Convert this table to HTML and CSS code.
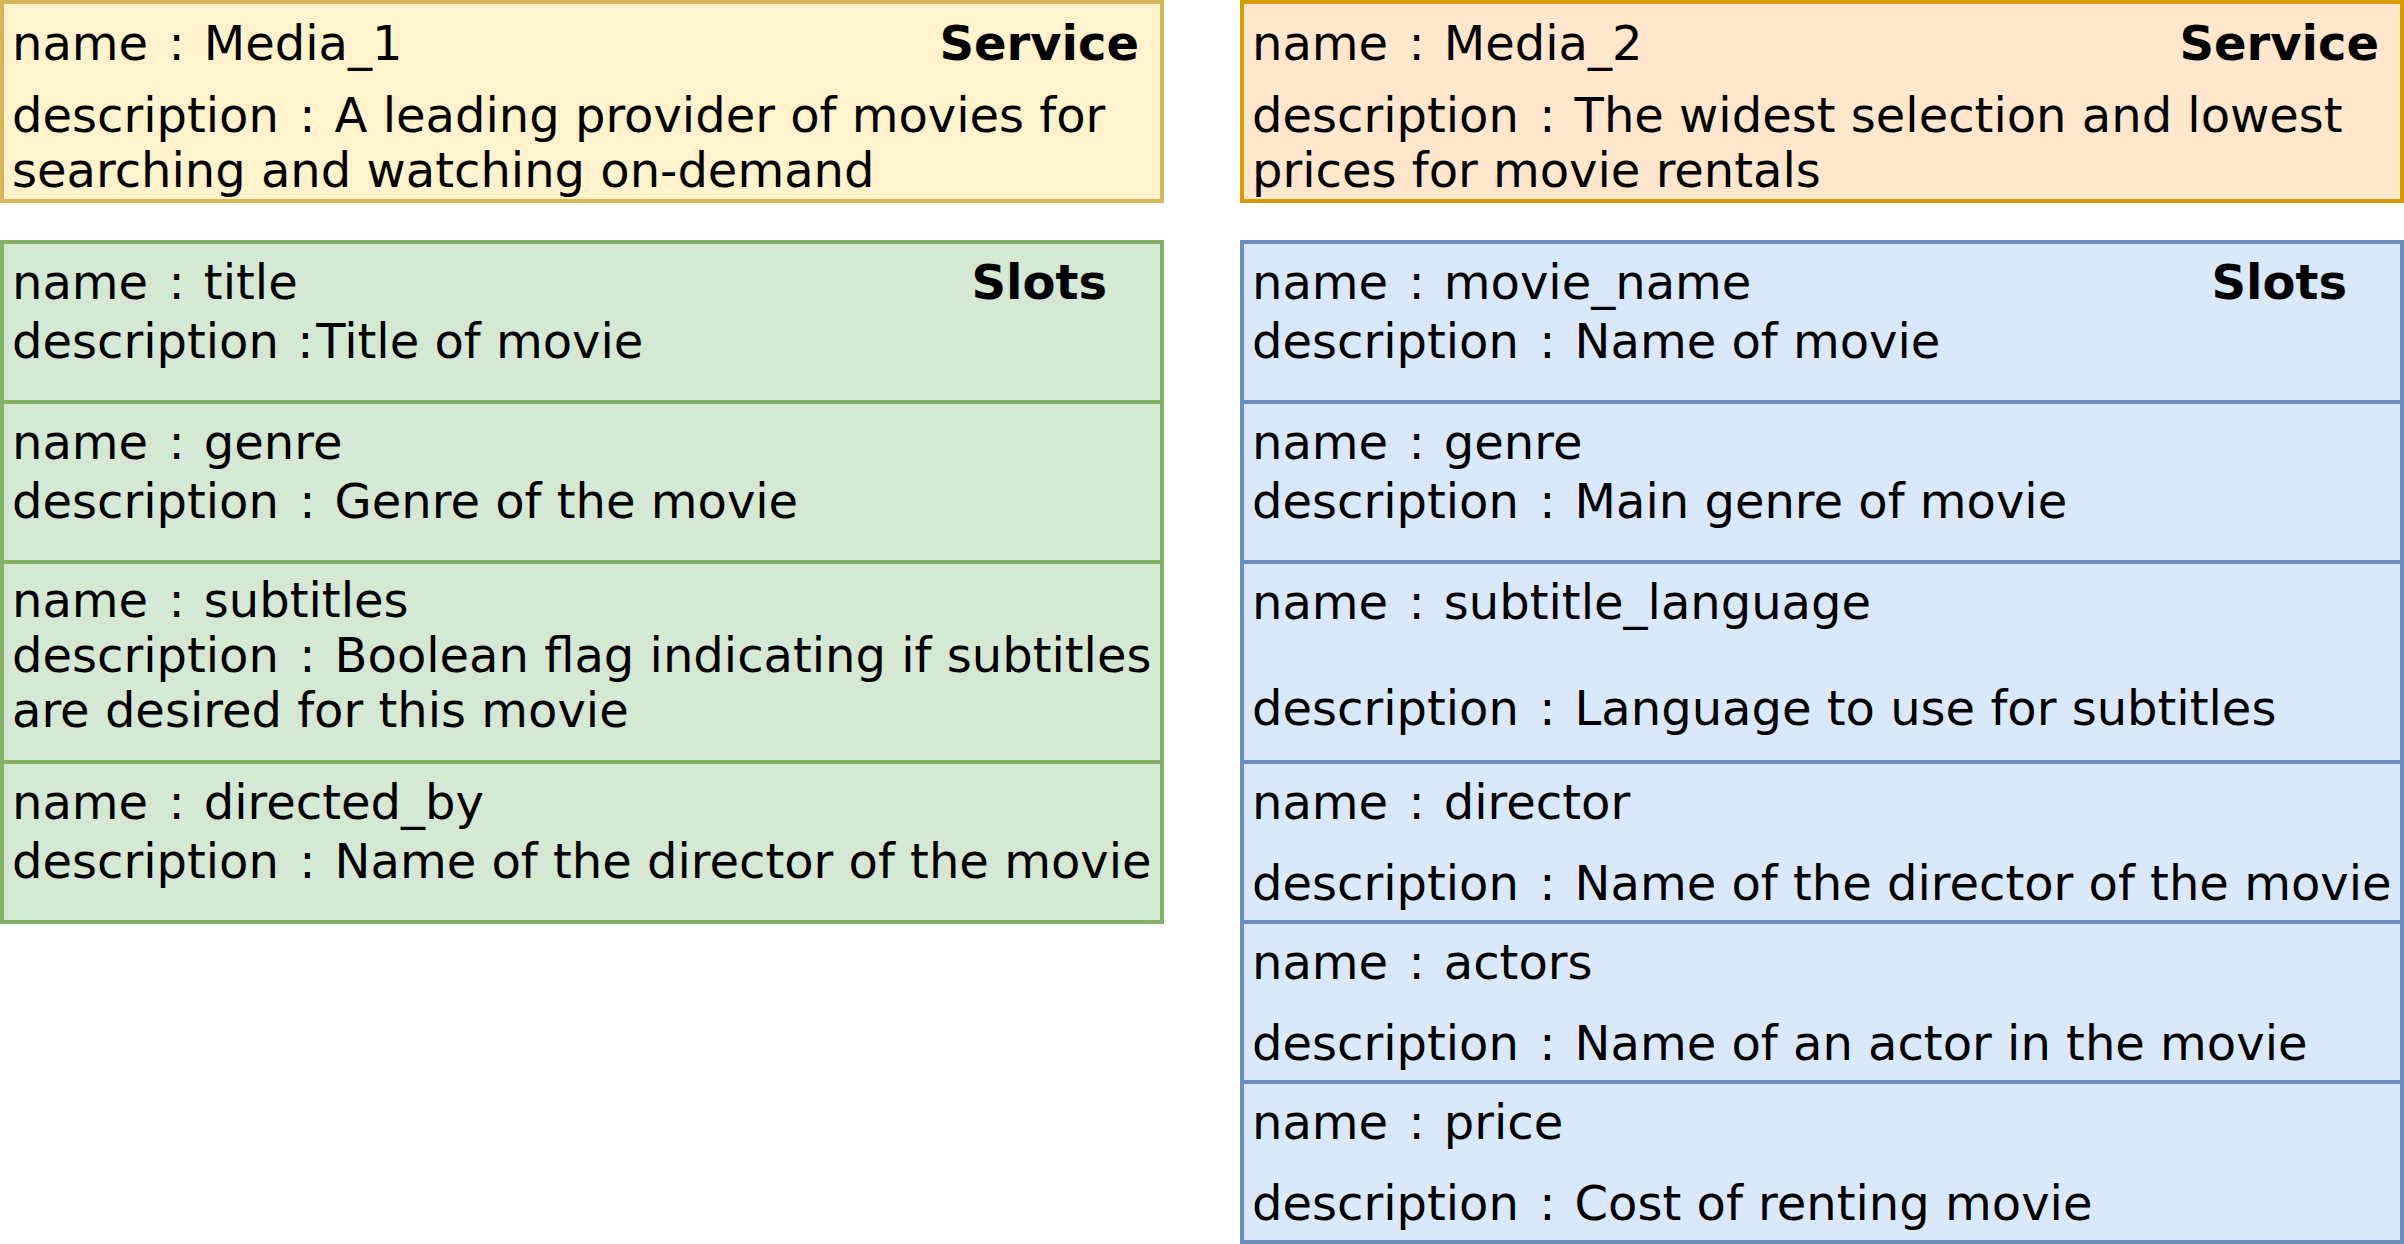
FILE: index.html
```html
<!DOCTYPE html>
<html lang="en">
<head>
<meta charset="utf-8">
<title>Media services</title>
<link rel="stylesheet" href="styles.css">
</head>
<body>
<div class="canvas">
  <div class="col">
    <div class="service service-yellow">
      <div class="head"><span>name<span class="sep"> : </span>Media_1</span><span class="tag tag-service">Service</span></div>
      <div class="desc desc-service">description<span class="sep"> : </span>A leading provider of movies for<br>searching and watching on-demand</div>
    </div>
    <div class="slots slots-green">
      <div class="slot">
        <div class="head"><span>name<span class="sep"> : </span>title</span><span class="tag tag-slots">Slots</span></div>
        <div class="desc gap-s">description <span class="sep-tight">:</span>Title of movie</div>
      </div>
      <div class="slot">
        <div class="head"><span>name<span class="sep"> : </span>genre</span></div>
        <div class="desc gap-s">description<span class="sep"> : </span>Genre of the movie</div>
      </div>
      <div class="slot slot-tall slot-tight">
        <div class="head"><span>name<span class="sep"> : </span>subtitles</span></div>
        <div class="desc gap-0">description<span class="sep"> : </span>Boolean flag indicating if subtitles<br>are desired for this movie</div>
      </div>
      <div class="slot">
        <div class="head"><span>name<span class="sep"> : </span>directed_by</span></div>
        <div class="desc gap-s">description<span class="sep"> : </span>Name of the director of the movie</div>
      </div>
    </div>
  </div>
  <div class="col">
    <div class="service service-orange">
      <div class="head"><span>name<span class="sep"> : </span>Media_2</span><span class="tag tag-service">Service</span></div>
      <div class="desc desc-service">description<span class="sep"> : </span>The widest selection and lowest<br>prices for movie rentals</div>
    </div>
    <div class="slots slots-blue">
      <div class="slot">
        <div class="head"><span>name<span class="sep"> : </span>movie_name</span><span class="tag tag-slots">Slots</span></div>
        <div class="desc gap-s">description<span class="sep"> : </span>Name of movie</div>
      </div>
      <div class="slot">
        <div class="head"><span>name<span class="sep"> : </span>genre</span></div>
        <div class="desc gap-s">description<span class="sep"> : </span>Main genre of movie</div>
      </div>
      <div class="slot slot-tall">
        <div class="head"><span>name<span class="sep"> : </span>subtitle_language</span></div>
        <div class="desc gap-l">description<span class="sep"> : </span>Language to use for subtitles</div>
      </div>
      <div class="slot">
        <div class="head"><span>name<span class="sep"> : </span>director</span></div>
        <div class="desc gap-m">description<span class="sep"> : </span>Name of the director of the movie</div>
      </div>
      <div class="slot">
        <div class="head"><span>name<span class="sep"> : </span>actors</span></div>
        <div class="desc gap-m">description<span class="sep"> : </span>Name of an actor in the movie</div>
      </div>
      <div class="slot">
        <div class="head"><span>name<span class="sep"> : </span>price</span></div>
        <div class="desc gap-m">description<span class="sep"> : </span>Cost of renting movie</div>
      </div>
    </div>
  </div>
</div>
</body>
</html>
```

FILE: styles.css
```css
html, body {
  margin: 0;
  padding: 0;
  background: #ffffff;
}

body {
  font-family: "DejaVu Sans", Verdana, sans-serif;
  font-size: 48px;
  line-height: 55px;
  color: #000000;
}

.canvas {
  display: grid;
  grid-template-columns: 1164px 1164px;
  column-gap: 76px;
  width: 2404px;
}

.col {
  display: flex;
  flex-direction: column;
  gap: 37px;
}

.service {
  box-sizing: border-box;
  height: 203px;
  border: 4px solid;
  padding: 12px 0 0 8px;
  white-space: nowrap;
}

.service-yellow {
  background: #fff2cc;
  border-color: #d6b656;
}

.service-orange {
  background: #ffe6cc;
  border-color: #d79b00;
}

.head {
  display: flex;
  justify-content: space-between;
  align-items: baseline;
}

.sep {
  padding: 0 4px 0 5px;
}

.sep-tight {
  padding: 0 3px 0 3px;
}

.tag {
  font-weight: bold;
}

.tag-service {
  margin-right: 21px;
}

.tag-slots {
  margin-right: 53px;
}

.desc-service {
  margin-top: 17px;
}

.slots {
  border: 4px solid;
  border-top: 0;
  white-space: nowrap;
}

.slots-green {
  background: #d5e8d4;
  border-color: #82b366;
}

.slots-blue {
  background: #dae8fc;
  border-color: #6c8ebf;
}

.slot {
  box-sizing: border-box;
  height: 160px;
  border-top: 4px solid;
  padding: 11px 0 0 8px;
}

.slots-green .slot {
  border-top-color: #82b366;
}

.slots-blue .slot {
  border-top-color: #6c8ebf;
}

.slot-tall {
  height: 200px;
}

.slot-tight {
  padding-top: 9px;
}

.gap-0 { margin-top: 0; }
.gap-s { margin-top: 4px; }
.gap-m { margin-top: 26px; }
.gap-l { margin-top: 51px; }
```
